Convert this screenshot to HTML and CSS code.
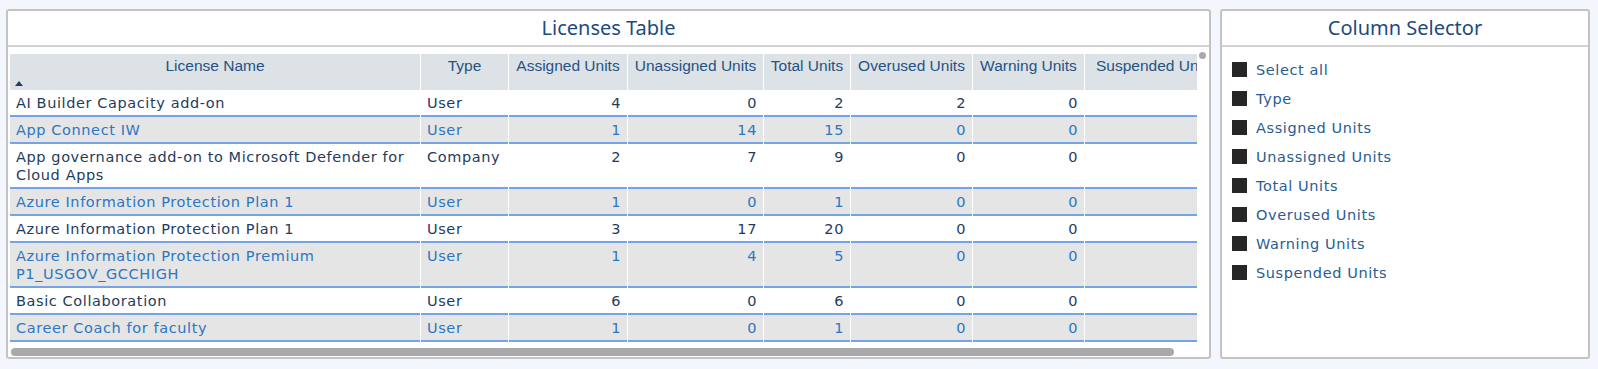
FILE: index.html
```html
<!DOCTYPE html>
<html lang="en">
<head>
    <meta charset="UTF-8">
    <meta name="viewport" content="width=device-width, initial-scale=1.0">
    <title>Licenses</title>
    <link rel="stylesheet" href="styles.css">
</head>
<body>
    <div class="page">
        <div class="panel licenses">
            <div class="panel-title">Licenses Table</div>
            <div class="table-box">
                <div class="table-view">
                    <table class="grid">
                        <colgroup>
                            <col style="width: 410px">
                            <col style="width: 87px">
                            <col style="width: 118px">
                            <col style="width: 135px">
                            <col style="width: 86px">
                            <col style="width: 121px">
                            <col style="width: 111px">
                            <col style="width: 140px">
                        </colgroup>
                        <thead>
                            <tr>
                                <th class="sorted">License Name<span class="sort-up"></span></th>
                                <th>Type</th>
                                <th>Assigned Units</th>
                                <th>Unassigned Units</th>
                                <th>Total Units</th>
                                <th>Overused Units</th>
                                <th>Warning Units</th>
                                <th>Suspended Units</th>
                            </tr>
                        </thead>
                        <tbody>
                            <tr>
                                <td>AI Builder Capacity add-on</td><td>User</td>
                                <td class="n">4</td><td class="n">0</td><td class="n">2</td><td class="n">2</td><td class="n">0</td><td></td>
                            </tr>
                            <tr class="alt">
                                <td>App Connect IW</td><td>User</td>
                                <td class="n">1</td><td class="n">14</td><td class="n">15</td><td class="n">0</td><td class="n">0</td><td></td>
                            </tr>
                            <tr>
                                <td>App governance add-on to Microsoft Defender for Cloud Apps</td><td>Company</td>
                                <td class="n">2</td><td class="n">7</td><td class="n">9</td><td class="n">0</td><td class="n">0</td><td></td>
                            </tr>
                            <tr class="alt">
                                <td>Azure Information Protection Plan 1</td><td>User</td>
                                <td class="n">1</td><td class="n">0</td><td class="n">1</td><td class="n">0</td><td class="n">0</td><td></td>
                            </tr>
                            <tr>
                                <td>Azure Information Protection Plan 1</td><td>User</td>
                                <td class="n">3</td><td class="n">17</td><td class="n">20</td><td class="n">0</td><td class="n">0</td><td></td>
                            </tr>
                            <tr class="alt">
                                <td>Azure Information Protection Premium P1_USGOV_GCCHIGH</td><td>User</td>
                                <td class="n">1</td><td class="n">4</td><td class="n">5</td><td class="n">0</td><td class="n">0</td><td></td>
                            </tr>
                            <tr>
                                <td>Basic Collaboration</td><td>User</td>
                                <td class="n">6</td><td class="n">0</td><td class="n">6</td><td class="n">0</td><td class="n">0</td><td></td>
                            </tr>
                            <tr class="alt">
                                <td>Career Coach for faculty</td><td>User</td>
                                <td class="n">1</td><td class="n">0</td><td class="n">1</td><td class="n">0</td><td class="n">0</td><td></td>
                            </tr>
                        </tbody>
                    </table>
                </div>
                <div class="vthumb"></div>
                <div class="hscroll"></div>
            </div>
        </div>

        <div class="panel selector">
            <div class="panel-title">Column Selector</div>
            <ul class="col-list">
                <li><span class="box"></span>Select all</li>
                <li><span class="box"></span>Type</li>
                <li><span class="box"></span>Assigned Units</li>
                <li><span class="box"></span>Unassigned Units</li>
                <li><span class="box"></span>Total Units</li>
                <li><span class="box"></span>Overused Units</li>
                <li><span class="box"></span>Warning Units</li>
                <li><span class="box"></span>Suspended Units</li>
            </ul>
        </div>
    </div>
</body>
</html>
```

FILE: styles.css
```css
body{
    margin: 0;
    background-color: #f3f7fd;
    font-family: "DejaVu Sans", Verdana, sans-serif;
}
.page{
    display: flex;
    gap: 9px;
    padding: 9px 8px 10px 6px;
    height: 350px;
}
.panel{
    box-sizing: border-box;
    height: 350px;
    background-color: white;
    border: 2px solid #c3c3c3;
    border-radius: 3px;
    display: flex;
    flex-direction: column;
}
.licenses{
    width: 1205px;
}
.selector{
    width: 370px;
}
.panel-title{
    height: 34px;
    line-height: 34px;
    text-align: center;
    font-family: "Noto Sans", "Open Sans", sans-serif;
    font-size: 20px;
    color: #1d4a7e;
    border-bottom: 2px solid #d2d2d2;
}
.table-box{
    position: relative;
    padding: 7px 0 0 1px;
}
.table-view{
    width: 1188px;
    overflow: hidden;
}
.grid{
    table-layout: fixed;
    width: 1216px;
    border-collapse: separate;
    border-spacing: 1px 0;
}
.grid th{
    background-color: #dde2e7;
    color: #255283;
    font-family: "Liberation Sans", Arial, sans-serif;
    font-size: 15.5px;
    font-weight: normal;
    line-height: 18px;
    height: 28px;
    padding: 3px 3px 4px 3px;
    vertical-align: top;
    text-align: center;
    white-space: nowrap;
    overflow: hidden;
}
.sort-up{
    display: block;
    width: 0;
    height: 0;
    margin: 6px 0 0 2px;
    border-left: 4px solid transparent;
    border-right: 4px solid transparent;
    border-bottom: 5px solid #1c3f6b;
}
.grid td{
    font-size: 14.5px;
    letter-spacing: 0.6px;
    line-height: 18px;
    padding: 4px 6px 3px 6px;
    vertical-align: top;
    color: #1f3b5e;
    border-bottom: 2px solid #74a4e6;
    overflow: hidden;
}
.grid td.n{
    text-align: right;
}
.grid tr.alt td{
    background-color: #e5e5e5;
    color: #2c76c4;
}
.vthumb{
    position: absolute;
    top: 5px;
    left: 1191px;
    width: 7px;
    height: 7px;
    border-radius: 50%;
    background-color: #a9a9a9;
}
.hscroll{
    margin: 6px 0 0 2px;
    width: 1163px;
    height: 8px;
    border-radius: 4px;
    background-color: #a9a9a9;
}
.col-list{
    list-style: none;
    margin: 0;
    padding: 8px 10px;
}
.col-list li{
    display: flex;
    align-items: center;
    height: 29px;
    font-size: 14.5px;
    letter-spacing: 0.6px;
    color: #2a5c93;
}
.col-list .box{
    width: 15px;
    height: 15px;
    margin-right: 9px;
    background-color: #262626;
}
```
